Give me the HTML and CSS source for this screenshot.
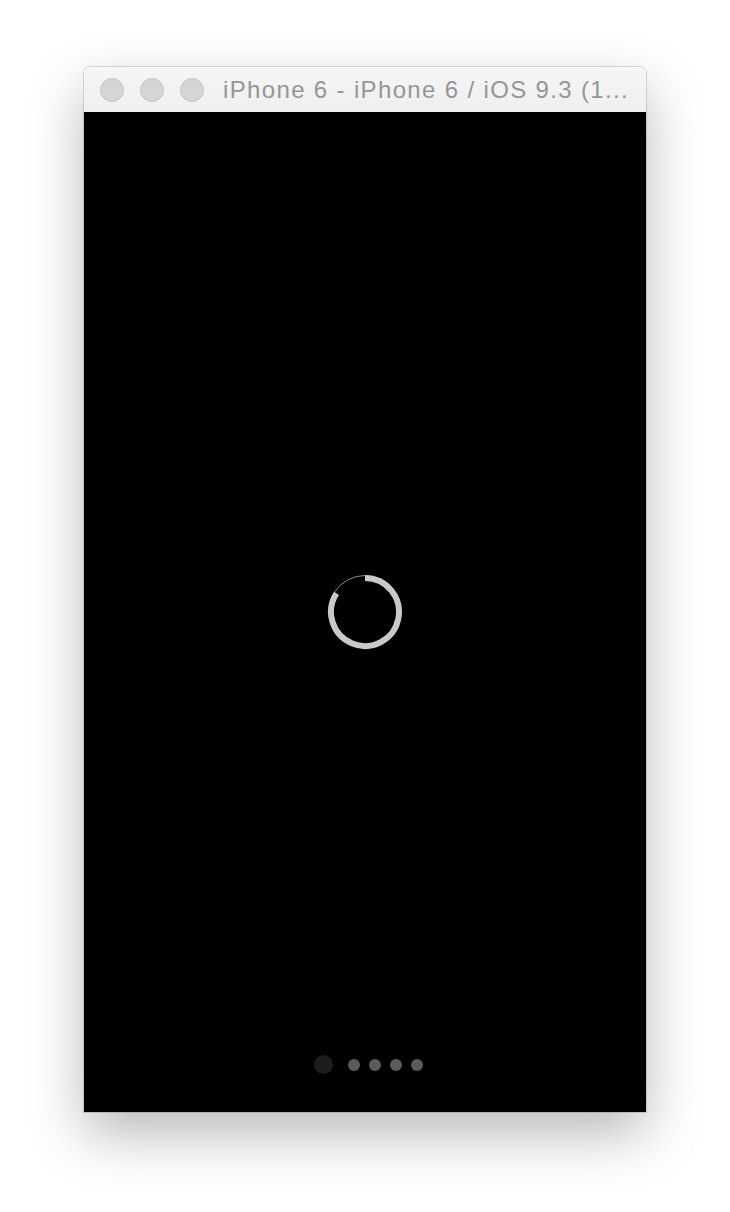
FILE: index.html
```html
<!DOCTYPE html>
<html>
<head>
<meta charset="utf-8">
<link rel="stylesheet" href="styles.css">
</head>
<body>
<div class="window">
  <div class="titlebar">
    <div class="lights">
      <span class="light"></span>
      <span class="light"></span>
      <span class="light"></span>
    </div>
    <div class="title">iPhone 6 - iPhone 6 / iOS 9.3 (1...</div>
  </div>
  <div class="screen">
    <svg class="spinner" width="80" height="80" viewBox="0 0 80 80">
      <path d="M40 6 A34 34 0 1 1 11.49 21.48" fill="none" stroke="#c9c9c9" stroke-width="6"/>
      <path d="M9.39 20.12 A36.5 36.5 0 0 1 40 3.5" fill="none" stroke="#8a8a8a" stroke-width="1"/>
    </svg>
    <div class="dots">
      <span class="dot big"></span>
      <span class="dot"></span>
      <span class="dot"></span>
      <span class="dot"></span>
      <span class="dot"></span>
    </div>
  </div>
</div>
</body>
</html>
```

FILE: styles.css
```css
html, body {
  margin: 0;
  padding: 0;
  background: #ffffff;
}
body {
  width: 730px;
  height: 1212px;
  overflow: hidden;
  padding-top: 67px;
  padding-left: 84px;
  box-sizing: border-box;
}
.window {
  width: 562px;
  display: flex;
  flex-direction: column;
  border-radius: 6px 6px 0 0;
  box-shadow: 0 22px 55px rgba(0, 0, 0, 0.28), 0 0 0 1px rgba(0, 0, 0, 0.13);
}
.titlebar {
  height: 45px;
  box-sizing: border-box;
  background: linear-gradient(#f6f6f6, #efefef);
  border-radius: 6px 6px 0 0;
  display: flex;
  align-items: center;
  padding-left: 16px;
}
.lights {
  display: flex;
  gap: 16px;
}
.light {
  width: 22px;
  height: 22px;
  border-radius: 50%;
  background: #d5d5d5;
  border: 1px solid #c5c5c5;
}
.title {
  margin-left: 19px;
  font-family: "Liberation Sans", Arial, sans-serif;
  font-size: 24px;
  color: #969696;
  white-space: nowrap;
  letter-spacing: 1.35px;
}
.screen {
  height: 1000px;
  background: #000000;
  display: grid;
  grid-template-areas: "stack";
}
.spinner {
  grid-area: stack;
  align-self: center;
  justify-self: center;
  margin-top: -1px;
}
.dots {
  grid-area: stack;
  align-self: end;
  justify-self: center;
  display: flex;
  align-items: center;
  gap: 9px;
  margin-bottom: 38px;
  margin-left: 6px;
}
.dot {
  width: 12px;
  height: 12px;
  border-radius: 50%;
  background: #5b5b5b;
}
.dot.big {
  width: 19px;
  height: 19px;
  background: #1d1d1d;
  margin-right: 6px;
}
```
